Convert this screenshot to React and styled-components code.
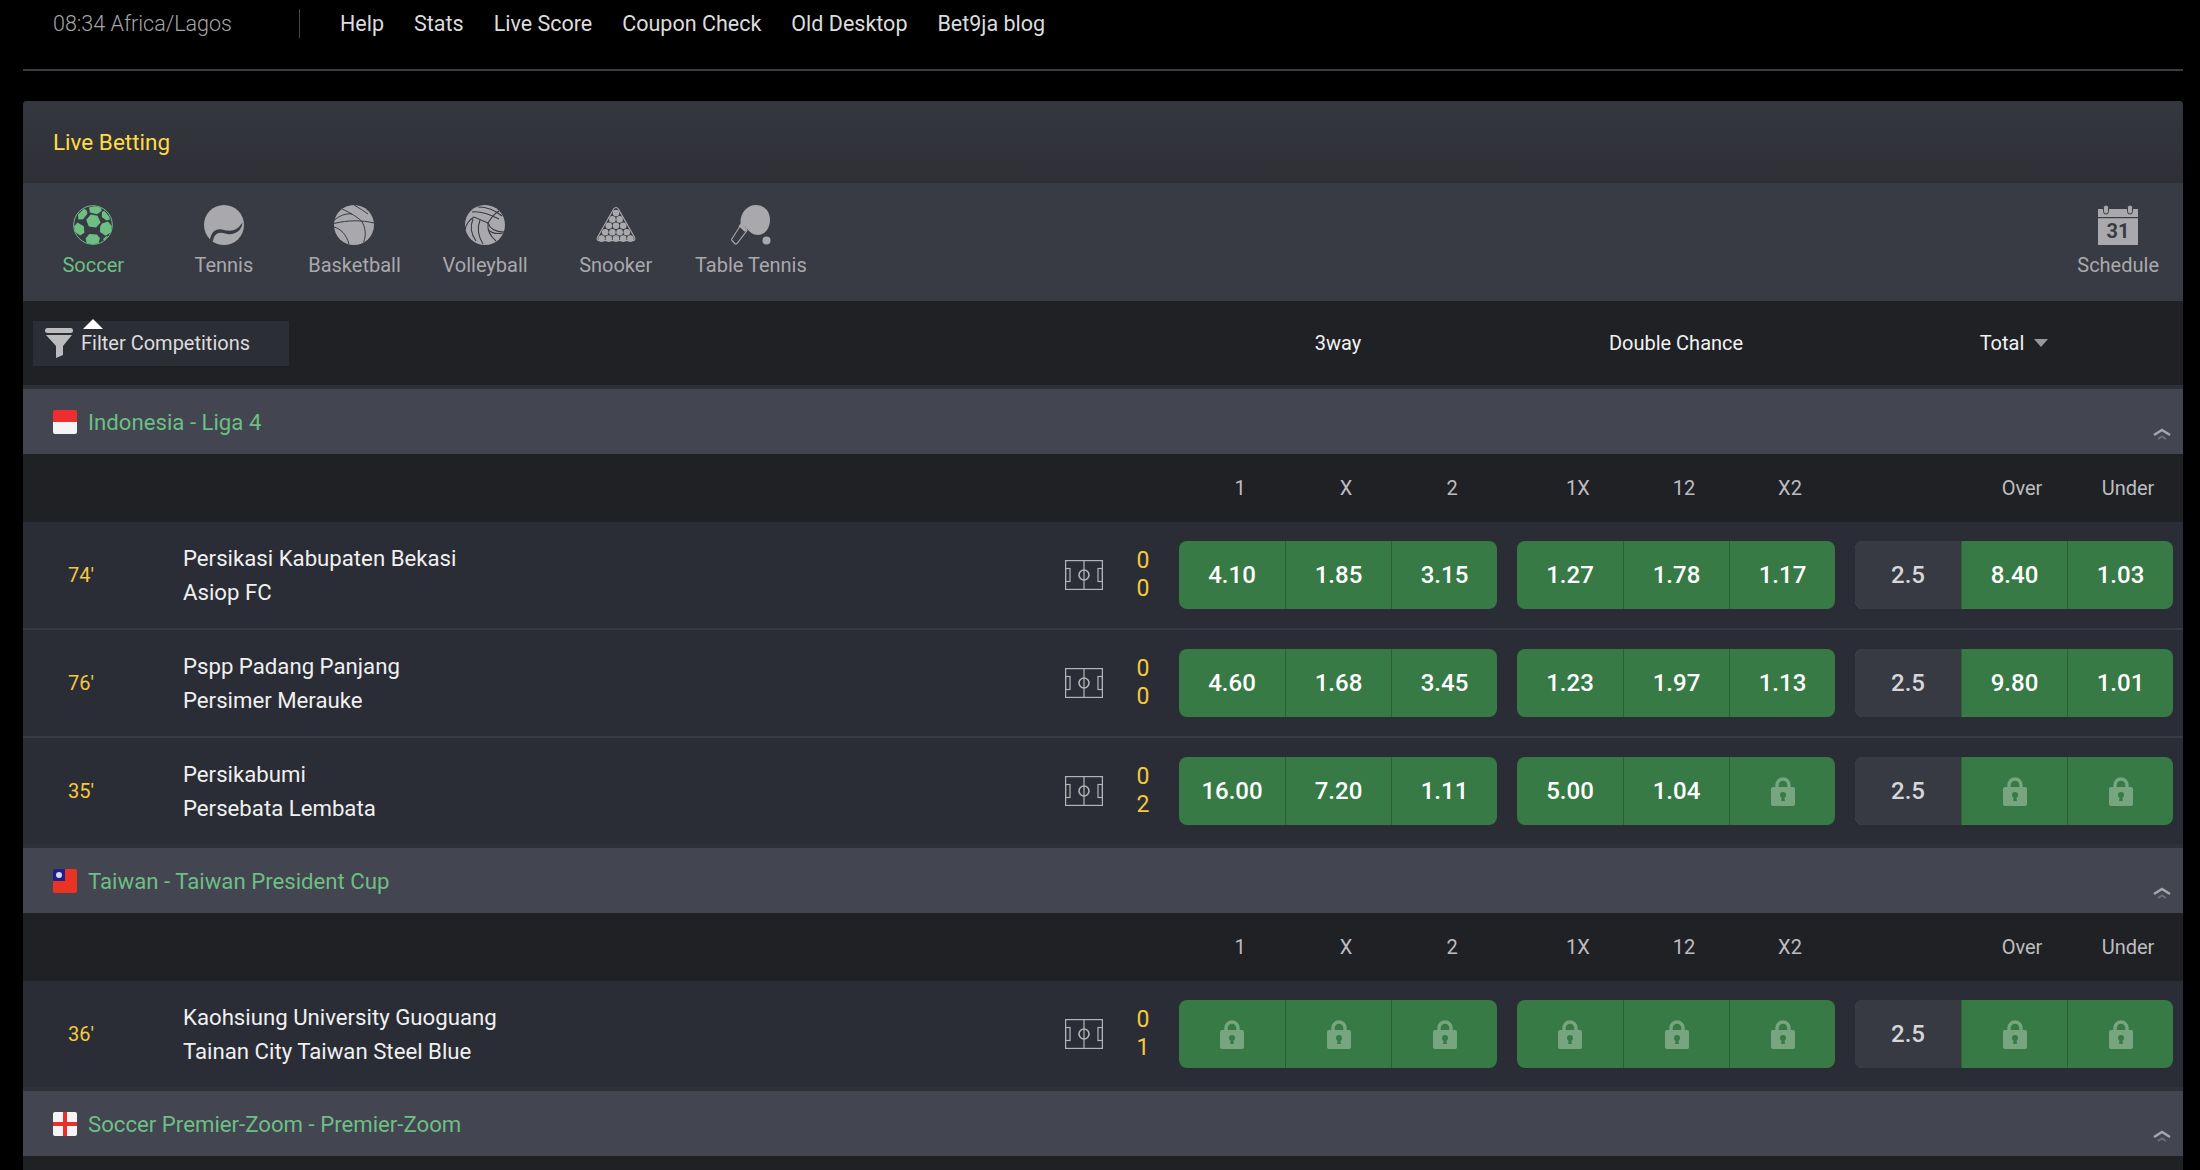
import React from "react";
import styled, { createGlobalStyle } from "styled-components";

const Global = createGlobalStyle`
  html, body { margin: 0; padding: 0; background: #000; height: 100%; overflow: hidden; }
  body { font-family: Roboto, "Liberation Sans", sans-serif; -webkit-font-smoothing: antialiased; }
  * { box-sizing: border-box; }
`;

const Page = styled.div`
  width: 2200px;
  height: 1170px;
  overflow: hidden;
  background: #000;
  padding: 0 17px 0 23px;
`;
const TopBar = styled.header`
  display: flex;
  align-items: center;
  height: 71px;
  padding: 0 0 23px 30px;
  border-bottom: 2px solid #3a3c43;
`;
const Clock = styled.span`
  font-size: 21.5px;
  font-weight: 300;
  color: #a6a6a8;
  width: 246px;
`;
const Divider = styled.span`
  width: 1px;
  height: 29px;
  background: #44464c;
  margin-right: 40px;
`;
const NavLink = styled.a`
  font-size: 21.5px;
  color: #dcdcdd;
  margin-right: 30px;
`;
const Panel = styled.main`
  margin-top: 30px;
  background: #202125;
  border-radius: 4px 4px 0 0;
  overflow: hidden;
`;
const TitleBar = styled.div`
  height: 82px;
  display: flex;
  align-items: center;
  padding-left: 30px;
  font-size: 22.5px;
  color: #ffdb45;
  background: linear-gradient(#35373e, #2e3036);
`;
const SportsBar = styled.nav`
  height: 118px;
  display: flex;
  background: #383a44;
  padding: 22px 0 0 5px;
`;
const SportTab = styled.div`
  position: relative;
  min-width: 130.6px;
  padding: 0 14px;
  display: flex;
  flex-direction: column;
  align-items: center;
  gap: 8px;
  font-size: 20px;
  line-height: 24px;
  color: ${(p) => (p.$active ? "#6dbf84" : "#a9a9ad")};
  ${(p) => p.$push && "margin-left: auto; padding: 0 24px 0 0; min-width: 0;"}
  ${(p) =>
    p.$active &&
    `&::after {
      content: "";
      position: absolute;
      left: 50%;
      bottom: -28px;
      margin-left: -10px;
      border: 10px solid transparent;
      border-top: 0;
      border-bottom-color: #fff;
    }`}
`;
const SportIcon = styled.svg`
  width: 40px;
  height: 40px;
  display: block;
`;
const FilterRow = styled.div`
  height: 84px;
  display: flex;
  align-items: center;
  padding-left: 10px;
`;
const FilterButton = styled.button`
  width: 256px;
  height: 45px;
  border: 0;
  background: #2c2e35;
  color: #dcdcdd;
  font: 400 20px Roboto, sans-serif;
  display: flex;
  align-items: center;
  gap: 8px;
  padding: 0 0 0 12px;
  margin-right: auto;
`;
const MarketTitle = styled.div`
  position: relative;
  width: 318px;
  margin-right: ${(p) => (p.$last ? "10px" : "20px")};
  text-align: center;
  color: #f2f2f2;
  font-size: 20px;
  ${(p) => p.$total && "padding-left: 0; display: flex; justify-content: center; align-items: center; gap: 10px;"}
`;
const Caret = styled.span`
  border: 7px solid transparent;
  border-top: 8px solid #98989c;
  border-bottom: 0;
`;
const GroupHeader = styled.div`
  height: 69px;
  border-top: 4px solid #2f3138;
  background: #434551;
  display: flex;
  align-items: center;
  justify-content: space-between;
  padding: 0 12px 0 30px;
`;
const League = styled.div`
  display: flex;
  align-items: center;
  gap: 11px;
  font-size: 22.2px;
  color: #6dbf84;
`;
const Flag = styled.svg`
  width: 24px;
  height: 24px;
  border-radius: 2px;
  display: block;
`;
const Chevron = styled.svg`
  width: 18px;
  height: 12px;
  align-self: flex-end;
  margin-bottom: 14px;
`;
const LabelRow = styled.div`
  height: 68px;
  display: flex;
  justify-content: flex-end;
  align-items: center;
  background: #202125;
`;
const LabelGroup = styled.div`
  width: 318px;
  padding-left: 8px;
  margin-right: ${(p) => (p.$last ? "10px" : "20px")};
  display: grid;
  grid-template-columns: repeat(3, 106px);
  text-align: center;
  font-size: 20px;
  color: #bdbdc0;
`;
const MatchRow = styled.div`
  height: ${(p) => (p.$last ? "106px" : "108px")};
  ${(p) => !p.$last && "border-bottom: 2px solid #373943;"}
  background: #2a2d35;
  display: flex;
  align-items: center;
`;
const Minute = styled.div`
  width: 160px;
  padding-left: 45px;
  font-size: 20px;
  color: #f6c93d;
`;
const Teams = styled.div`
  flex: 1;
  font-size: 22.2px;
  line-height: 34.5px;
  color: #f0f0f1;
`;
const Pitch = styled.svg`
  width: 38px;
  height: 30px;
  margin-right: 24px;
  flex: none;
`;
const Score = styled.div`
  width: 32px;
  text-align: center;
  margin-right: 20px;
  font-size: 23px;
  line-height: 28.5px;
  color: #f6c93d;
`;
const Market = styled.div`
  width: 318px;
  height: 68px;
  display: grid;
  grid-template-columns: repeat(3, 1fr);
  margin-right: ${(p) => (p.$last ? "10px" : "20px")};
  border-radius: 8px;
  overflow: hidden;
  background: #377a45;
`;
const Odd = styled.div`
  display: flex;
  align-items: center;
  justify-content: center;
  font-size: 24px;
  font-weight: 500;
  color: #fff;
  & + & { border-left: 1.5px solid #2a6133; }
`;
const Line = styled(Odd)`
  background: #383a43;
  color: #d5d6d9;
`;
const LockIcon = styled.svg`
  width: 24px;
  height: 30px;
  display: block;
`;

const Lock = () => (
  <LockIcon viewBox="0 0 24 30">
    <path d="M6 14V9a6 6 0 0 1 12 0v5" fill="none" stroke="#76a57f" strokeWidth="3.4" />
    <rect x="0" y="11" width="24" height="19" rx="2" fill="#76a57f" />
    <circle cx="12" cy="19" r="3" fill="#377a45" />
    <path d="M10.8 20h2.4l.7 5h-3.8z" fill="#377a45" />
  </LockIcon>
);

const Soccer = () => (
  <SportIcon viewBox="0 0 40 40">
    <circle cx="20" cy="20" r="19.3" fill="none" stroke="#6dbf84" strokeWidth="1" />
    <g fill="#6dbf84">
      <path d="M16 2.6 22 1.2l6 1.6 .6 3.2-4.7 3.2L17 7.6z" />
      <path d="M17.8 9.4 24.6 10.8l3 6.6-4.6 5.2-7.2-1-2.6-6.8z" />
      <path d="M29 18.5 35 16.6l3.6 4.4-.6 6.2-5.4 3.6-5.6-3.8.2-5.6z" />
      <path d="M4.4 17.6l6.4 3.6.6 6.6-4.3 2.8-5-3.6-1-5.6z" />
      <path d="M12.6 33.4 16.2 29l7.6.4 3.2 3.8-1.6 5-6.2 1-5.6-1.4z" />
      <path d="M5 9.6 11 3.8l2.6 1.4.8 3.6-4.4 5.4-4.6 .4z" />
      <path d="M31.2 5.8 36 11.2l1 3.2-3.6 1-4.6-3.4.2-5z" />
      <path d="M30 34l3.5-3 1.5.5-4 4z" />
    </g>
  </SportIcon>
);
const Tennis = () => (
  <SportIcon viewBox="0 0 40 40">
    <circle cx="20" cy="20" r="20" fill="#a9a9ad" />
    <path d="M6 35C7 27 12 23 18 24.5 27 27 33 26 38.5 17.5 38 26 30 31 21 28.5 14 26.5 10 29 9 36.5z" fill="#383a44" />
  </SportIcon>
);
const Basketball = () => (
  <SportIcon viewBox="0 0 40 40">
    <circle cx="20" cy="20" r="20" fill="#a9a9ad" />
    <g fill="none" stroke="#383a44" strokeWidth="1">
      <path d="M0 18.5C14 15 28 15 40 18" />
      <path d="M8 4C17 8 23 12 27.5 16c4 6 5 14 2 21.5" />
      <path d="M20 0c5 3 10 6 14 9" />
      <path d="M0 22c7 2 12 7 15 17" />
      <path d="M0.5 15C5 11 12 8 18 9" />
    </g>
  </SportIcon>
);
const Volleyball = () => (
  <SportIcon viewBox="0 0 40 40">
    <circle cx="20" cy="20" r="20" fill="#a9a9ad" />
    <g fill="none" stroke="#383a44" strokeWidth="1.1">
      <path d="M7 7c8-1 17 2 27 7" />
      <path d="M13 2c8 0 17 3 24 9" />
      <path d="M23 18c3-5 7-10 11-12" />
      <path d="M23 18 9 12c-5 3-8 7-9 13" />
      <path d="M8 14c-3 7-2 15 3 22" />
      <path d="M15 15c-3 8-2 16 3 24" />
      <path d="M23 18c2 6 7 9 16 9" />
      <path d="M23 18c-1 8 2 13 8 18" />
      <path d="M23 25c5 4 10 4 15 3" />
    </g>
  </SportIcon>
);
const Snooker = () => {
  const balls = [];
  const rows = [1, 2, 3, 4, 5];
  rows.forEach((n, r) => {
    for (let i = 0; i < n; i++) {
      balls.push(<circle key={`${r}-${i}`} cx={20 + (i - (n - 1) / 2) * 7.2} cy={8 + r * 6.4} r="3.3" />);
    }
  });
  return (
    <SportIcon viewBox="0 0 40 40">
      <path d="M20 2.5c1.2 0 1.8 .6 2.4 1.6L38.4 32c1.2 2.2 .2 3.6-2 3.6H3.6c-2.2 0-3.2-1.4-2-3.6L17.6 4.1c.6-1 1.2-1.6 2.4-1.6z" fill="none" stroke="#a9a9ad" strokeWidth="1.1" />
      <g fill="#a9a9ad">{balls}</g>
    </SportIcon>
  );
};
const TableTennis = () => (
  <SportIcon viewBox="0 0 40 40">
    <path d="M9.5 18.5C9 8 16 0 25 0c8 0 14 6 14 15 0 8-5 15-12 15-5 0-8-3-11-6z" fill="#a9a9ad" />
    <path d="M10 19.5l6 6L6 38.5c-.8.6-1.6.6-2.2 0L1 35.5c-.6-.6-.6-1.2 0-1.8z" fill="none" stroke="#a9a9ad" strokeWidth="1.1" />
    <path d="M9.8 18.5 16 24.5 14 27 7.5 21z" fill="#a9a9ad" />
    <circle cx="35.5" cy="35.5" r="4" fill="#a9a9ad" />
  </SportIcon>
);
const Calendar = () => (
  <SportIcon viewBox="0 0 40 40">
    <rect x="0" y="4" width="40" height="36" fill="#a9a9ad" />
    <rect x="0" y="12" width="40" height="1.2" fill="#383a44" />
    <rect x="5.5" y="0" width="5" height="9" rx="2.5" fill="#a9a9ad" stroke="#383a44" strokeWidth="1" />
    <rect x="29.5" y="0" width="5" height="9" rx="2.5" fill="#a9a9ad" stroke="#383a44" strokeWidth="1" />
    <text x="20" y="33" textAnchor="middle" fontFamily="Roboto, sans-serif" fontWeight="700" fontSize="20" fill="#383a44">31</text>
  </SportIcon>
);
const Funnel = () => (
  <svg width="28" height="30" viewBox="0 0 28 30">
    <rect x="0" y="0" width="28" height="5" rx="2.5" fill="#bcbcbe" />
    <path d="M1 7h26L18 18v9l-7 3V18z" fill="#bcbcbe" />
  </svg>
);
const PitchIcon = () => (
  <Pitch viewBox="0 0 38 30">
    <g fill="none" stroke="#b3b4b7" strokeWidth="1.2">
      <rect x=".6" y=".6" width="36.8" height="28.8" />
      <path d="M19 .6v28.8" />
      <rect x=".6" y="8.5" width="4.4" height="13" />
      <rect x="33" y="8.5" width="4.4" height="13" />
      <circle cx="19" cy="15" r="5" strokeWidth="1.6" />
    </g>
  </Pitch>
);
const Collapse = () => (
  <Chevron viewBox="0 0 18 12">
    <path d="M1 7 9 2l8 5" fill="none" stroke="#a5a6ab" strokeWidth="2.6" />
    <path d="M5 11 9 8.5l4 2.5" fill="none" stroke="#6d6f78" strokeWidth="2" />
  </Chevron>
);

const FlagIndonesia = () => (
  <Flag viewBox="0 0 24 24">
    <rect width="24" height="12" fill="#ee2e2e" />
    <rect y="12" width="24" height="12" fill="#f4f4f4" />
  </Flag>
);
const FlagTaiwan = () => (
  <Flag viewBox="0 0 24 24">
    <rect width="24" height="24" fill="#ea3323" />
    <rect width="12" height="12" fill="#1d1f8c" />
    <circle cx="6" cy="6" r="3" fill="#d8d8f0" />
  </Flag>
);
const FlagEngland = () => (
  <Flag viewBox="0 0 24 24">
    <rect width="24" height="24" fill="#f4f4f4" />
    <rect x="10" width="4" height="24" fill="#e8302a" />
    <rect y="10" width="24" height="4" fill="#e8302a" />
  </Flag>
);

const sports = [
  ["Soccer", Soccer],
  ["Tennis", Tennis],
  ["Basketball", Basketball],
  ["Volleyball", Volleyball],
  ["Snooker", Snooker],
  ["Table Tennis", TableTennis],
];

const L = "lock";
const groups = [
  {
    flag: FlagIndonesia,
    name: "Indonesia - Liga 4",
    matches: [
      { t: "74'", a: "Persikasi Kabupaten Bekasi", b: "Asiop FC", s: [0, 0], w: ["4.10", "1.85", "3.15"], d: ["1.27", "1.78", "1.17"], o: ["8.40", "1.03"] },
      { t: "76'", a: "Pspp Padang Panjang", b: "Persimer Merauke", s: [0, 0], w: ["4.60", "1.68", "3.45"], d: ["1.23", "1.97", "1.13"], o: ["9.80", "1.01"] },
      { t: "35'", a: "Persikabumi", b: "Persebata Lembata", s: [0, 2], w: ["16.00", "7.20", "1.11"], d: ["5.00", "1.04", L], o: [L, L] },
    ],
  },
  {
    flag: FlagTaiwan,
    name: "Taiwan - Taiwan President Cup",
    matches: [
      { t: "36'", a: "Kaohsiung University Guoguang", b: "Tainan City Taiwan Steel Blue", s: [0, 1], w: [L, L, L], d: [L, L, L], o: [L, L] },
    ],
  },
  { flag: FlagEngland, name: "Soccer Premier-Zoom - Premier-Zoom", matches: [] },
];

const OddCell = ({ v }) => <Odd>{v === L ? <Lock /> : v}</Odd>;

const Labels = () => (
  <LabelRow>
    <LabelGroup><span>1</span><span>X</span><span>2</span></LabelGroup>
    <LabelGroup><span>1X</span><span>12</span><span>X2</span></LabelGroup>
    <LabelGroup $last><span /><span>Over</span><span>Under</span></LabelGroup>
  </LabelRow>
);

export default function App() {
  return (
    <Page>
      <Global />
      <TopBar>
        <Clock>08:34 Africa/Lagos</Clock>
        <Divider />
        {["Help", "Stats", "Live Score", "Coupon Check", "Old Desktop", "Bet9ja blog"].map((n) => (
          <NavLink key={n}>{n}</NavLink>
        ))}
      </TopBar>
      <Panel>
        <TitleBar>Live Betting</TitleBar>
        <SportsBar>
          {sports.map(([n, Icon], i) => (
            <SportTab key={n} $active={i === 0}>
              <Icon />
              {n}
            </SportTab>
          ))}
          <SportTab $push>
            <Calendar />
            Schedule
          </SportTab>
        </SportsBar>
        <FilterRow>
          <FilterButton>
            <Funnel />
            Filter Competitions
          </FilterButton>
          <MarketTitle>3way</MarketTitle>
          <MarketTitle>Double Chance</MarketTitle>
          <MarketTitle $last $total>Total <Caret /></MarketTitle>
        </FilterRow>
        {groups.map((g) => (
          <section key={g.name}>
            <GroupHeader>
              <League>
                <g.flag />
                {g.name}
              </League>
              <Collapse />
            </GroupHeader>
            <Labels />
            {g.matches.map((m, i) => (
              <MatchRow key={m.a} $last={i === g.matches.length - 1}>
                <Minute>{m.t}</Minute>
                <Teams>
                  <div>{m.a}</div>
                  <div>{m.b}</div>
                </Teams>
                <PitchIcon />
                <Score>
                  <div>{m.s[0]}</div>
                  <div>{m.s[1]}</div>
                </Score>
                <Market>{m.w.map((v, k) => <OddCell key={k} v={v} />)}</Market>
                <Market>{m.d.map((v, k) => <OddCell key={k} v={v} />)}</Market>
                <Market $last>
                  <Line>2.5</Line>
                  {m.o.map((v, k) => <OddCell key={k} v={v} />)}
                </Market>
              </MatchRow>
            ))}
          </section>
        ))}
      </Panel>
    </Page>
  );
}
